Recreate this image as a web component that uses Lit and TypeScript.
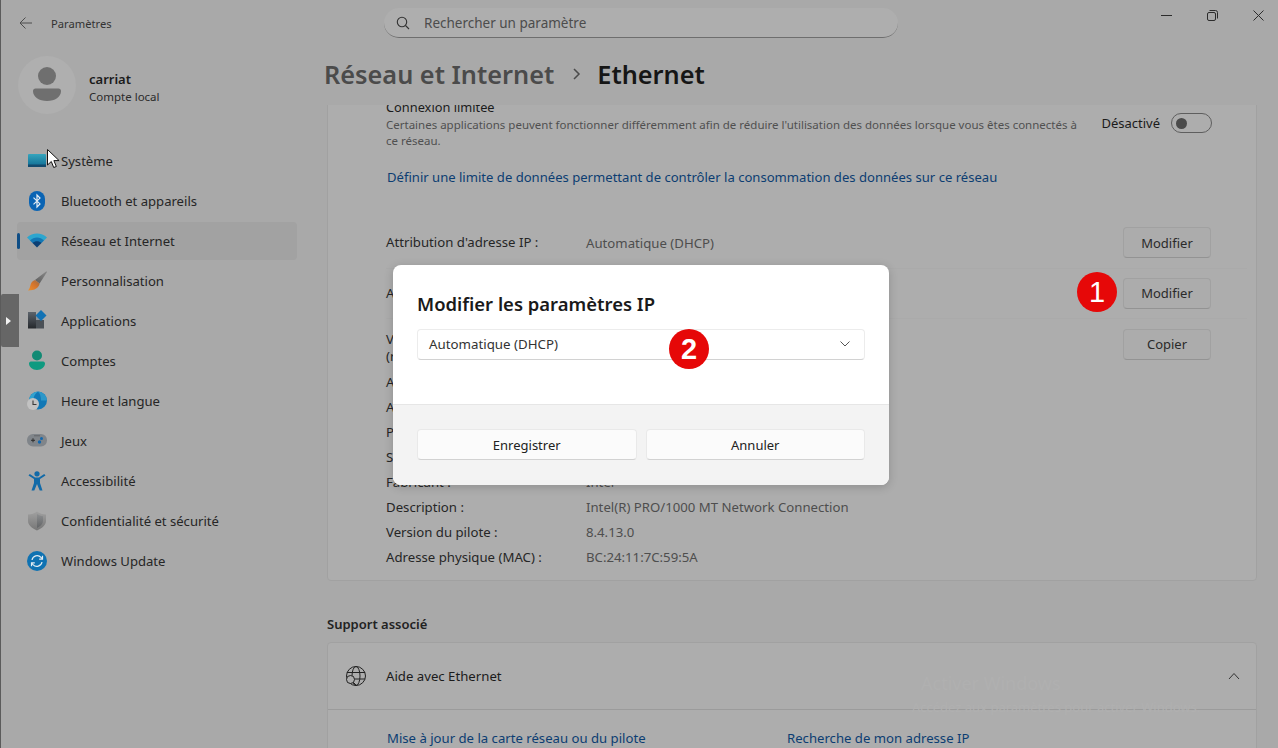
import { LitElement, html, css, svg } from 'lit';
import { customElement } from 'lit/decorators.js';

const NAV_ICONS: Record<string, unknown> = {
  system: svg`<defs><linearGradient id="sys" x1="0" y1="0" x2="0" y2="1"><stop offset="0" stop-color="#35a5bd"/><stop offset="1" stop-color="#0e6a92"/></linearGradient></defs>
    <rect x="1" y="3" width="18" height="13" rx="1" fill="url(#sys)"/><rect x="1" y="13.5" width="18" height="2.5" fill="#124a6e"/>`,
  bluetooth: svg`<rect x="2" y="0" width="16" height="20" rx="8" fill="#0a64b4"/>
    <path d="M6.5 6.6 13 12.9 10 16V4l3 3.1-6.5 6.3" fill="none" stroke="#e6eef5" stroke-width="1.2"/>`,
  network: svg`<path d="M0 6.5C5.5 1 14.5 1 20 6.5L17 9.5H3Z" fill="#2ca6cf"/>
    <path d="M3 9.5C7 5.5 13 5.5 17 9.5L14.5 12H5.5Z" fill="#1377b4"/>
    <path d="M5.5 12C8 9.6 12 9.6 14.5 12L10 16.5Z" fill="#0b3f74"/>`,
  brush: svg`<defs><linearGradient id="bru" x1="1" y1="0" x2="0" y2="1"><stop offset="0" stop-color="#8a8a8a"/><stop offset="1" stop-color="#5a5a5a"/></linearGradient>
    <linearGradient id="bri" x1="1" y1="0" x2="0" y2="1"><stop offset="0" stop-color="#9a6a44"/><stop offset=".5" stop-color="#d9762a"/><stop offset="1" stop-color="#e8902e"/></linearGradient></defs>
    <path d="M19.4 .2 20 .9 12.6 12.6 8 8.9Z" fill="url(#bru)"/>
    <path d="M8 9l4.600 3.600c-.5 4.200-4.800 7-11.600 7 1.500-1.500 2-3.500 2.500-5.500.5-2.600 2.400-4.600 4.500-5.100Z" fill="url(#bri)"/>`,
  apps: svg`<defs><linearGradient id="app" x1="0" y1="0" x2="0" y2="1"><stop offset="0" stop-color="#5d646c"/><stop offset="1" stop-color="#25282c"/></linearGradient></defs>
    <rect x="1" y="1" width="8" height="16.5" fill="url(#app)"/>
    <rect x="9" y="9" width="8" height="8.5" fill="#4b5157"/><rect x="9" y="5" width="4" height="4" fill="#8b939b"/>
    <path d="M14 -1 19.5 4.500 14 10 8.500 4.500Z" fill="#1272b4"/>`,
  accounts: svg`<circle cx="10" cy="4.500" r="5" fill="#118a74"/><path d="M2 12.500c0-1 .8-2 1.800-2h12.400c1 0 1.800 1 1.800 2 0 3.500-3.500 6.500-8 6.500s-8-3-8-6.500Z" fill="#0f9a80"/>`,
  time: svg`<circle cx="11" cy="9.500" r="9" fill="#1278b6"/><path d="M11 .5a9 9 0 0 1 9 9h-6c0-4-1-7-3-9Z" fill="#2c97c9"/>
    <path d="M2 9.500a9 9 0 0 1 9-9C8 2.500 6.500 5.500 6.500 8.500Z" fill="#32a2cf"/>
    <circle cx="6" cy="13" r="6" fill="#c2c2c2"/><path d="M6 9.500v4h3.500" fill="none" stroke="#3a3a3a" stroke-width="1.100"/>`,
  games: svg`<rect x="0" y="3" width="20" height="12.5" rx="6" fill="#80858a"/>
    <path d="M4 9.300h4M6 7.300v4" stroke="#2c2c2c" stroke-width="1"/>
    <circle cx="14.500" cy="7.500" r="1.500" fill="#1167ad"/><circle cx="12.500" cy="11" r="1.700" fill="#1167ad"/>
    <circle cx="8" cy="4.800" r=".5" fill="#333"/><circle cx="10" cy="4.800" r=".5" fill="#333"/><circle cx="12" cy="4.800" r=".5" fill="#333"/>`,
  access: svg`<circle cx="10" cy="2.800" r="2.600" fill="#116aa8"/>
    <path d="M1.500 4.500 7 8v4l-2.500 7.500h2.800L10 13l2.700 6.500h2.800L13 12V8l5.500-3.500-1.300-1.500L12 6.500H8L2.800 3Z" fill="#116aa8"/>`,
  shield: svg`<defs><linearGradient id="shd" x1="0" y1="0" x2="0" y2="1"><stop offset="0" stop-color="#a0a0a0"/><stop offset="1" stop-color="#767676"/></linearGradient>
    <linearGradient id="shr" x1="0" y1="0" x2="0" y2="1"><stop offset="0" stop-color="#8c8e90"/><stop offset="1" stop-color="#626466"/></linearGradient></defs>
    <path d="M10 .5c2.500 2 5.500 2.800 9 3v6.500c0 4-3.500 7-9 9.500-5.500-2.500-9-5.500-9-9.500V3.500c3.500-.2 6.500-1 9-3Z" fill="url(#shd)"/>
    <path d="M10 3c1.800 1.300 3.800 2 6 2.300v4.700c0 3-2.500 5.300-6 7Z" fill="url(#shr)"/>`,
  update: svg`<circle cx="10" cy="10" r="10" fill="#0f72b2"/>
    <path d="M5 9a5.200 5.200 0 0 1 9-2.600l1 1.200M15 11a5.200 5.200 0 0 1-9 2.600l-1-1.200" fill="none" stroke="#e3edf3" stroke-width="1.200"/>
    <path d="M15.500 4.800v3.300h-3.300M4.500 15.200v-3.300h3.300" fill="none" stroke="#e3edf3" stroke-width="1.200"/>`,
};

const NAV_ITEMS = [
  { icon: 'system', label: 'Système' },
  { icon: 'bluetooth', label: 'Bluetooth et appareils' },
  { icon: 'network', label: 'Réseau et Internet', selected: true },
  { icon: 'brush', label: 'Personnalisation' },
  { icon: 'apps', label: 'Applications' },
  { icon: 'accounts', label: 'Comptes' },
  { icon: 'time', label: 'Heure et langue' },
  { icon: 'games', label: 'Jeux' },
  { icon: 'access', label: 'Accessibilité' },
  { icon: 'shield', label: 'Confidentialité et sécurité' },
  { icon: 'update', label: 'Windows Update' },
];

const DETAILS = [
  ['Adresse IPv6 :', 'fe80::1'],
  ['Adresse IPv4 :', '192.168.1.20'],
  ['Passerelle :', '192.168.1.1'],
  ['Serveurs DNS :', '192.168.1.1'],
  ['Fabricant :', 'Intel'],
  ['Description :', 'Intel(R) PRO/1000 MT Network Connection'],
  ['Version du pilote :', '8.4.13.0'],
  ['Adresse physique (MAC) :', 'BC:24:11:7C:59:5A'],
];

@customElement('app-root')
export class AppRoot extends LitElement {
  static styles = css`
    :host {
      display: block;
      position: relative;
      height: 100vh;
      overflow: hidden;
      background: #a9a9a9;
      color: #1b1b1b;
      font-family: 'Noto Sans', 'Open Sans', sans-serif;
      font-size: 13.2px;
    }
    .window {
      display: flex;
      flex-direction: column;
      height: 100%;
      border-left: 1px solid #5b5b5b;
      box-sizing: border-box;
    }

    .titlebar {
      display: flex;
      align-items: center;
      height: 46px;
      flex: none;
    }
    .back {
      display: flex;
      width: 50px;
      justify-content: center;
    }
    .app-name {
      width: 333px;
      font-size: 11.2px;
      color: #333;
    }
    .search {
      display: flex;
      align-items: center;
      gap: 14px;
      width: 514px;
      height: 30px;
      box-sizing: border-box;
      padding-left: 12px;
      background: #aeaeae;
      border-bottom: 1px solid #6e6e6e;
      border-radius: 15px;
      color: #4c4c4c;
      font-size: 13.5px;
    }
    .controls {
      display: flex;
      margin-left: auto;
      margin-right: -3px;
      align-self: flex-start;
    }
    .control {
      display: flex;
      justify-content: center;
      width: 46px;
      padding-top: 10px;
    }

    .body {
      display: flex;
      flex: 1;
      min-height: 0;
    }

    .sidebar {
      width: 326px;
      flex: none;
      box-sizing: border-box;
      padding: 10px 0 0 16px;
    }
    .account {
      display: flex;
      align-items: center;
      gap: 13px;
      margin: 0 0 28px 1px;
    }
    .avatar {
      width: 58px;
      height: 58px;
      border-radius: 50%;
      background: #afafaf;
      display: flex;
      align-items: center;
      justify-content: center;
    }
    .account-text {
      padding-top: 6px;
    }
    .account-name {
      font-size: 13px;
      font-weight: 600;
      line-height: 18px;
    }
    .account-type {
      font-size: 11.5px;
      line-height: 18px;
      color: #2b2b2b;
    }
    .nav {
      display: flex;
      flex-direction: column;
      gap: 2px;
      width: 280px;
    }
    .nav-item {
      position: relative;
      display: flex;
      align-items: center;
      gap: 14px;
      height: 38px;
      padding-left: 10px;
      border-radius: 4px;
      font-size: 13.1px;
      color: #262626;
    }
    .nav-item svg {
      overflow: visible;
    }
    .nav-item.selected {
      background: #a2a2a2;
    }
    .nav-item.selected::before {
      content: '';
      position: absolute;
      left: 0;
      top: 11px;
      width: 3px;
      height: 16px;
      border-radius: 2px;
      background: #0e4d85;
    }

    .main {
      flex: 1;
      min-width: 0;
      display: flex;
      flex-direction: column;
      margin-right: 21px;
    }
    .page-title {
      display: flex;
      align-items: center;
      height: 59px;
      box-sizing: border-box;
      padding-bottom: 3px;
      flex: none;
      margin-left: -3px;
      font-size: 25.3px;
      font-weight: 600;
      color: #4b4b4b;
    }
    .page-title svg {
      margin: 0 16px 0 18px;
    }
    .page-title strong {
      font-weight: 600;
      color: #161616;
    }
    .scroller {
      flex: 1;
      min-height: 0;
      overflow: hidden;
    }
    .card {
      background: #adadad;
      border: 1px solid #a1a1a1;
      border-radius: 4px;
    }
    .details {
      margin-top: -27px;
      padding: 18px 45px 10px 58px;
    }
    .limit {
      display: flex;
      align-items: center;
      justify-content: space-between;
    }
    .limit-name {
      line-height: 18px;
      margin-top: 1px;
      margin-bottom: 0.5px;
      font-size: 12.8px;
    }
    .limit-desc {
      font-size: 11.5px;
      line-height: 16.5px;
      color: #505050;
    }
    .limit-state {
      display: flex;
      align-items: center;
      gap: 11px;
      margin-right: -1px;
      font-size: 13px;
    }
    .toggle {
      width: 35px;
      height: 18px;
      border: 1px solid #5e5e5e;
      border-radius: 10px;
      display: flex;
      align-items: center;
      padding-left: 4px;
    }
    .toggle::before {
      content: '';
      width: 11px;
      height: 11px;
      border-radius: 50%;
      background: #4a4a4a;
    }
    .link {
      color: #0c3d72;
      font-size: 13.08px;
    }
    .limit-link {
      margin: 17.5px 0 31px 1px;
      line-height: 20px;
    }
    .row {
      display: flex;
      align-items: center;
      height: 50.5px;
      box-sizing: border-box;
    }
    .row .label {
      width: 200px;
      flex: none;
      font-size: 13.2px;
      color: #262626;
      line-height: 17px;
    }
    .row .value {
      flex: 1;
      font-size: 13.2px;
      color: #4e4e4e;
    }
    .row.spaced {
      border-bottom: 1px solid #aaa;
      margin-right: -36px;
      padding-right: 36px;
    }
    .row.tall .label {
      padding-top: 7px;
    }
    .btn {
      width: 88px;
      height: 31px;
      box-sizing: border-box;
      display: flex;
      align-items: center;
      justify-content: center;
      background: #acacac;
      border: 1px solid #a1a1a1;
      border-bottom-color: #939393;
      border-radius: 4px;
      font-size: 13px;
      color: #2a2a2a;
    }
    .info {
      display: flex;
      align-items: center;
      height: 25px;
    }
    .info .label {
      width: 200px;
      flex: none;
      font-size: 13.2px;
      color: #262626;
    }
    .info .value {
      font-size: 13.2px;
      color: #4e4e4e;
    }

    .section-title {
      margin: 33px 0 8px;
      font-size: 13px;
      font-weight: 600;
      line-height: 20px;
      color: #222;
    }
    .help-head {
      display: flex;
      align-items: center;
      height: 67px;
      box-sizing: border-box;
      padding: 0 16px 0 17px;
      border-bottom: 1px solid #9b9b9b;
      font-size: 13.2px;
      gap: 19px;
    }
    .help-head svg:last-child {
      margin-left: auto;
    }
    .help-links {
      display: flex;
      padding: 18px 0 40px 59px;
      line-height: 20px;
    }
    .help-links .link {
      width: 400px;
      font-size: 13.15px;
    }

    .watermark {
      position: absolute;
      left: 921px;
      top: 671px;
      color: #b0b0b0;
      font-size: 18px;
      line-height: 25px;
    }
    .watermark small {
      display: block;
      font-size: 13px;
      line-height: 18px;
      margin: 2px 0 0 -9px;
      white-space: nowrap;
    }

    .handle {
      position: absolute;
      left: 1px;
      top: 294px;
      width: 18px;
      height: 53px;
      background: #666;
      border-radius: 2px 0 0 2px;
      display: flex;
      align-items: center;
      padding-left: 5px;
      box-sizing: border-box;
    }
    .handle::before {
      content: '';
      border-left: 5px solid #f2f2f2;
      border-top: 4px solid transparent;
      border-bottom: 4px solid transparent;
    }
    .cursor {
      position: absolute;
      left: 47px;
      top: 149px;
    }

    .dialog {
      position: absolute;
      left: 393px;
      top: 265px;
      width: 496px;
      height: 220px;
      background: #fff;
      border-radius: 8px;
      overflow: hidden;
      display: flex;
      flex-direction: column;
      box-shadow: 0 2px 10px rgba(0, 0, 0, 0.18);
    }
    .dialog-content {
      flex: 1;
      padding: 25px 24px 0;
    }
    .dialog-title {
      font-size: 18.45px;
      font-weight: 600;
      line-height: 28px;
      color: #1a1a1a;
    }
    .select {
      display: flex;
      align-items: center;
      justify-content: space-between;
      height: 31px;
      box-sizing: border-box;
      margin-top: 11px;
      padding: 0 14px 2px 11px;
      border: 1px solid #ececec;
      border-bottom-color: #d2d2d2;
      border-radius: 4px;
      font-size: 13.3px;
      color: #333;
    }
    .dialog-footer {
      display: flex;
      gap: 9px;
      height: 81px;
      flex: none;
      box-sizing: border-box;
      padding: 24px 24px 0;
      background: #f3f3f3;
      border-top: 1px solid #e6e6e6;
    }
    .dialog-btn {
      flex: 1;
      height: 31px;
      box-sizing: border-box;
      display: flex;
      align-items: center;
      justify-content: center;
      background: #fbfbfb;
      border: 1px solid #e9e9e9;
      border-bottom-color: #d2d2d2;
      border-radius: 4px;
      font-size: 13px;
      color: #222;
    }

    .badge {
      position: absolute;
      width: 40px;
      height: 40px;
      border-radius: 50%;
      background: #e60808;
      color: #fff;
      font-family: 'Liberation Sans', sans-serif;
      font-size: 29px;
      line-height: 40px;
      text-align: center;
    }
    .badge.one {
      left: 1077px;
      top: 272px;
    }
    .badge.two {
      left: 669px;
      top: 329px;
      font-weight: 700;
    }
  `;

  private renderNavItem(item: { icon: string; label: string; selected?: boolean }) {
    return html`
      <div class="nav-item ${item.selected ? 'selected' : ''}">
        <svg width="20" height="20" viewBox="0 0 20 20">${NAV_ICONS[item.icon]}</svg>
        <span>${item.label}</span>
      </div>
    `;
  }

  render() {
    return html`
      <div class="window">
        <div class="titlebar">
          <div class="back">
            <svg width="14" height="14" viewBox="0 0 14 14" fill="none" stroke="#4d4d4d" stroke-width="1">
              <path d="M13 7H1M6.5 1.5 1 7l5.5 5.5" />
            </svg>
          </div>
          <div class="app-name">Paramètres</div>
          <div class="search">
            <svg width="14" height="14" viewBox="0 0 14 14" fill="none" stroke="#333" stroke-width="1.1">
              <circle cx="6" cy="6" r="4.7" /><path d="M9.5 9.5 13 13" />
            </svg>
            <span>Rechercher un paramètre</span>
          </div>
          <div class="controls">
            <div class="control">
              <svg width="11" height="11" viewBox="0 0 11 11" fill="none" stroke="#2c2c2c"><path d="M0 5.5h11" /></svg>
            </div>
            <div class="control">
              <svg width="11" height="11" viewBox="0 0 11 11" fill="none" stroke="#2c2c2c">
                <rect x=".5" y="2.5" width="8" height="8" rx="1.5" /><path d="M2.5.5h6a2 2 0 0 1 2 2v6" />
              </svg>
            </div>
            <div class="control">
              <svg width="11" height="11" viewBox="0 0 11 11" fill="none" stroke="#2c2c2c">
                <path d="M.5.5l10 10M10.5.5l-10 10" />
              </svg>
            </div>
          </div>
        </div>
        <div class="body">
          <div class="sidebar">
            <div class="account">
              <div class="avatar">
                <svg width="30" height="36" viewBox="0 0 30 36" fill="#6f6f6f">
                  <circle cx="15" cy="9" r="9" />
                  <path d="M1 24c0-1.5 1-2.500 2.500-2.500h23c1.500 0 2.500 1 2.500 2.500 0 6-6 10-14 10S1 30 1 24Z" />
                </svg>
              </div>
              <div class="account-text">
                <div class="account-name">carriat</div>
                <div class="account-type">Compte local</div>
              </div>
            </div>
            <div class="nav">${NAV_ITEMS.map((item) => this.renderNavItem(item))}</div>
          </div>
          <div class="main">
            <div class="page-title">
              <span>Réseau et Internet</span>
              <svg width="9" height="12" viewBox="0 0 9 12" fill="none" stroke="#4b4b4b" stroke-width="1.5"><path d="M2 1l5 5-5 5" /></svg>
              <strong>Ethernet</strong>
            </div>
            <div class="scroller">
              <div class="card details">
                <div class="limit">
                  <div>
                    <div class="limit-name">Connexion limitée</div>
                    <div class="limit-desc">
                      Certaines applications peuvent fonctionner différemment afin de réduire l'utilisation des données lorsque vous êtes connectés à<br />ce réseau.
                    </div>
                  </div>
                  <div class="limit-state"><span>Désactivé</span><div class="toggle"></div></div>
                </div>
                <div class="link limit-link">Définir une limite de données permettant de contrôler la consommation des données sur ce réseau</div>
                <div class="row spaced">
                  <div class="label">Attribution d'adresse IP :</div>
                  <div class="value">Automatique (DHCP)</div>
                  <div class="btn">Modifier</div>
                </div>
                <div class="row spaced">
                  <div class="label">Attribution du serveur DNS :</div>
                  <div class="value">Automatique (DHCP)</div>
                  <div class="btn">Modifier</div>
                </div>
                <div class="row tall">
                  <div class="label">Vitesse de liaison<br />(réception/transmission) :</div>
                  <div class="value">1000/1000 (Mbps)</div>
                  <div class="btn">Copier</div>
                </div>
                ${DETAILS.map(
                  ([label, value]) => html`
                    <div class="info"><div class="label">${label}</div><div class="value">${value}</div></div>
                  `
                )}
              </div>

              <div class="section-title">Support associé</div>
              <div class="card">
                <div class="help-head">
                  <svg width="22" height="22" viewBox="0 0 22 22" fill="none" stroke="#222" stroke-width="1">
                    <circle cx="11" cy="11" r="9.5" />
                    <ellipse cx="11" cy="11" rx="4" ry="9.5" />
                    <path d="M2 7.500h18M2 14h18" />
                    <circle cx="5.5" cy="14.5" r="4" fill="#adadad" />
                    <path d="M8.500 17.500l3.500 3.500" />
                  </svg>
                  <span>Aide avec Ethernet</span>
                  <svg width="12" height="8" viewBox="0 0 12 8" fill="none" stroke="#333"><path d="M1 7l5-5.500L11 7" /></svg>
                </div>
                <div class="help-links">
                  <div class="link">Mise à jour de la carte réseau ou du pilote</div>
                  <div class="link">Recherche de mon adresse IP</div>
                </div>
              </div>
            </div>
          </div>
        </div>
      </div>

      <div class="watermark">Activer Windows<small>Accédez aux paramètres pour activer Windows.</small></div>
      <div class="handle"></div>
      <svg class="cursor" width="13" height="20" viewBox="0 0 13 20">
        <path d="M.5.5V16l3.800-3.500 2.400 6 2.600-1-2.400-5.900h5.200Z" fill="#fff" stroke="#111" stroke-width="1" />
      </svg>

      <div class="dialog">
        <div class="dialog-content">
          <div class="dialog-title">Modifier les paramètres IP</div>
          <div class="select">
            <span>Automatique (DHCP)</span>
            <svg width="10" height="6" viewBox="0 0 10 6" fill="none" stroke="#555"><path d="M.5.5 5 5 9.500.5" /></svg>
          </div>
        </div>
        <div class="dialog-footer">
          <div class="dialog-btn">Enregistrer</div>
          <div class="dialog-btn">Annuler</div>
        </div>
      </div>
      <div class="badge one">1</div>
      <div class="badge two">2</div>
    `;
  }
}
